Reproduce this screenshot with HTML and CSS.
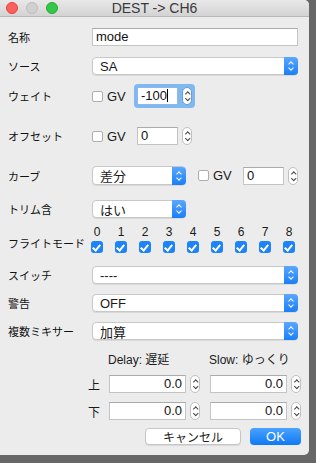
FILE: index.html
```html
<!DOCTYPE html>
<html lang="ja">
<head>
    <meta charset="UTF-8">
    <title>DEST -> CH6</title>
    <link rel="stylesheet" href="styles.css">
</head>
<body>
    <div class="window">
        <div class="titlebar">
            <div class="lights">
                <span class="light red"></span>
                <span class="light gray"></span>
                <span class="light green"></span>
            </div>
            <div class="title">DEST -&gt; CH6</div>
        </div>

        <div class="form">
            <div class="row r-name">
                <div class="label">名称</div>
                <div class="text wide">mode</div>
            </div>

            <div class="row r-source">
                <div class="label">ソース</div>
                <div class="select wide"><span>SA</span><i class="arrow"></i></div>
            </div>

            <div class="row r-weight">
                <div class="label">ウェイト</div>
                <span class="check"></span><span class="gv">GV</span>
                <div class="focus">
                    <div class="text num">-100<b class="caret"></b></div>
                    <i class="stepper"></i>
                </div>
            </div>

            <div class="row r-offset">
                <div class="label">オフセット</div>
                <span class="check"></span><span class="gv">GV</span>
                <div class="spin">
                    <div class="text num">0</div>
                    <i class="stepper"></i>
                </div>
            </div>

            <div class="row r-curve">
                <div class="label">カーブ</div>
                <div class="select short"><span>差分</span><i class="arrow"></i></div>
                <span class="check c-curve"></span><span class="gv">GV</span>
                <div class="spin s-curve">
                    <div class="text num">0</div>
                    <i class="stepper"></i>
                </div>
            </div>

            <div class="row r-trim">
                <div class="label">トリム含</div>
                <div class="select short"><span>はい</span><i class="arrow"></i></div>
            </div>

            <div class="row r-modes">
                <div class="label">フライトモード</div>
                <div class="modes">
                    <div class="mode"><span>0</span><i class="tick"></i></div>
                    <div class="mode"><span>1</span><i class="tick"></i></div>
                    <div class="mode"><span>2</span><i class="tick"></i></div>
                    <div class="mode"><span>3</span><i class="tick"></i></div>
                    <div class="mode"><span>4</span><i class="tick"></i></div>
                    <div class="mode"><span>5</span><i class="tick"></i></div>
                    <div class="mode"><span>6</span><i class="tick"></i></div>
                    <div class="mode"><span>7</span><i class="tick"></i></div>
                    <div class="mode"><span>8</span><i class="tick"></i></div>
                </div>
            </div>

            <div class="row r-switch">
                <div class="label">スイッチ</div>
                <div class="select wide"><span>----</span><i class="arrow"></i></div>
            </div>

            <div class="row r-warn">
                <div class="label">警告</div>
                <div class="select wide"><span>OFF</span><i class="arrow"></i></div>
            </div>

            <div class="row r-mix">
                <div class="label">複数ミキサー</div>
                <div class="select wide"><span>加算</span><i class="arrow"></i></div>
            </div>

            <div class="heads">
                <span class="h-delay">Delay: 遅延</span>
                <span class="h-slow">Slow: ゆっくり</span>
            </div>

            <div class="row r-up">
                <div class="side">上</div>
                <div class="spin"><div class="text val">0.0</div><i class="stepper"></i></div>
                <div class="spin"><div class="text val">0.0</div><i class="stepper"></i></div>
            </div>

            <div class="row r-down">
                <div class="side">下</div>
                <div class="spin"><div class="text val">0.0</div><i class="stepper"></i></div>
                <div class="spin"><div class="text val">0.0</div><i class="stepper"></i></div>
            </div>

            <div class="buttons">
                <div class="btn cancel">キャンセル</div>
                <div class="btn ok">OK</div>
            </div>
        </div>
    </div>
</body>
</html>
```

FILE: styles.css
```css
body {
    margin: 0;
    width: 316px;
    height: 463px;
    background: #676767;
    overflow: hidden;
    font-family: "Liberation Sans", "Noto Sans CJK JP", sans-serif;
    font-size: 12px;
    color: #1a1a1a;
}

.window {
    width: 309px;
    height: 455px;
    background: #ececec;
    border-radius: 0 5px 5px 0;
    overflow: hidden;
}

/* Title bar */
.titlebar {
    height: 16px;
    display: flex;
    align-items: center;
    background: linear-gradient(#e8e8e8, #d3d3d3);
    border-bottom: 1px solid #b8b8b8;
}

.lights {
    display: flex;
    gap: 8px;
    padding-left: 6px;
    width: 58px;
    box-sizing: border-box;
    flex: none;
}

.light {
    width: 12px;
    height: 12px;
    border-radius: 50%;
    box-sizing: border-box;
}

.red { background: #fc605c; border: 1px solid #e14640; }
.gray { background: #d0d0d0; border: 1px solid #bcbcbc; }
.green { background: #34c84a; border: 1px solid #26a934; }

.title {
    flex: 1;
    text-align: center;
    font-size: 14px;
    color: #3a3a3a;
    margin-left: -58px;
}

/* Form */
.form {
    padding: 0 0 0 8px;
}

.row {
    display: flex;
    align-items: center;
    height: 18px;
}

.label {
    width: 84px;
    flex: none;
    font-size: 11px;
    color: #111;
}

.text {
    height: 18px;
    box-sizing: border-box;
    background: #fff;
    border: 1px solid #c4c4c4;
    border-top-color: #aaa;
    padding: 0 3px;
    font-size: 13px;
    line-height: 16px;
    color: #111;
}

.wide { width: 206px; }

.select {
    height: 18px;
    box-sizing: border-box;
    background: #fff;
    border: 1px solid #c8c8c8;
    border-radius: 4px;
    display: flex;
    align-items: center;
    font-size: 13px;
    padding-left: 7px;
    box-shadow: 0 1px 0 rgba(0, 0, 0, 0.08);
}

.select span { flex: 1; }

.short { width: 94px; }

.arrow {
    width: 14px;
    height: 18px;
    margin-right: -1px;
    background: linear-gradient(#5aa7ff, #1a7ff6);
    border-radius: 0 4px 4px 0;
    position: relative;
}

.arrow::before,
.arrow::after {
    content: "";
    position: absolute;
    left: 5px;
    width: 3px;
    height: 3px;
    border-left: 1.5px solid #fff;
    border-top: 1.5px solid #fff;
}

.arrow::before { top: 5px; transform: rotate(45deg); }
.arrow::after { top: 9px; transform: rotate(225deg); }

.check {
    width: 11px;
    height: 11px;
    box-sizing: border-box;
    border: 1px solid #adadad;
    border-radius: 2px;
    background: #fff;
    flex: none;
}

.gv {
    margin-left: 4px;
    font-size: 13px;
    width: 27px;
}

.spin {
    display: flex;
    align-items: center;
    gap: 4px;
}

.stepper {
    width: 10px;
    height: 18px;
    box-sizing: border-box;
    border: 1px solid #c0c0c0;
    border-radius: 5px;
    background: #fff;
    position: relative;
}

.stepper::before,
.stepper::after {
    content: "";
    position: absolute;
    left: 2.5px;
    width: 2.5px;
    height: 2.5px;
    border-left: 1px solid #444;
    border-top: 1px solid #444;
}

.stepper::before { top: 4px; transform: rotate(45deg); }
.stepper::after { top: 9px; transform: rotate(225deg); }

.num { width: 41px; }

.focus {
    display: flex;
    align-items: center;
    gap: 4px;
    padding: 3px;
    background: #7fb8f3;
    border-radius: 4px;
}

.focus .text { border-color: #8db8e8; }

.focus .stepper { border-color: #6e9ccc; }

.caret {
    display: inline-block;
    width: 1px;
    height: 13px;
    background: #000;
    vertical-align: -2px;
}

.r-name { margin-top: 11px; }
.r-source { margin-top: 11px; }
.r-weight { margin-top: 9px; height: 24px; }
.r-offset { margin-top: 19px; }
.r-offset .spin { margin-left: 3px; }

.r-curve { margin-top: 21px; height: 19px; }
.r-curve .select { height: 19px; }
.c-curve { margin-left: 12px; }
.s-curve { margin-left: 3px; }

.r-trim { margin-top: 15px; }

.r-modes {
    margin-top: 7px;
    height: 28px;
    align-items: flex-end;
}

.r-modes .label { padding-bottom: 2px; }

.modes {
    display: flex;
    margin-left: -1px;
}

.mode {
    width: 24px;
    display: flex;
    flex-direction: column;
    align-items: center;
    gap: 2px;
    font-size: 12px;
    line-height: 13px;
    margin-left: -6px;
    margin-right: 6px;
}

.tick {
    width: 12px;
    height: 12px;
    border-radius: 3px;
    background: #1d83f7;
    position: relative;
}

.tick::after {
    content: "";
    position: absolute;
    left: 3px;
    top: 1.5px;
    width: 3px;
    height: 6px;
    border-right: 2px solid #fff;
    border-bottom: 2px solid #fff;
    transform: rotate(40deg);
}

.r-switch { margin-top: 13px; }
.r-warn { margin-top: 10px; }
.r-mix { margin-top: 10px; }

.heads {
    display: flex;
    height: 16px;
    margin-top: 10px;
    font-size: 12px;
}

.h-delay { margin-left: 100px; width: 101px; }

/* Delay / Slow rows */
.r-up, .r-down { gap: 10px; }
.r-up { margin-top: 9px; }
.r-down { margin-top: 9px; }

.side {
    width: 92px;
    flex: none;
    text-align: right;
    margin-right: -1px;
    font-size: 12px;
}

.val {
    width: 77px;
    text-align: right;
}

.buttons {
    display: flex;
    justify-content: flex-end;
    gap: 9px;
    margin-top: 8px;
    padding-right: 8px;
}

.btn {
    height: 17px;
    box-sizing: border-box;
    border-radius: 4px;
    display: flex;
    align-items: center;
    justify-content: center;
    font-size: 12px;
}

.cancel {
    width: 96px;
    background: #fff;
    border: 1px solid #c6c6c6;
    box-shadow: 0 1px 0 rgba(0, 0, 0, 0.08);
}

.ok {
    width: 51px;
    color: #fff;
    font-size: 13px;
    background: linear-gradient(#4aa2fd, #0f79f5);
}
```
